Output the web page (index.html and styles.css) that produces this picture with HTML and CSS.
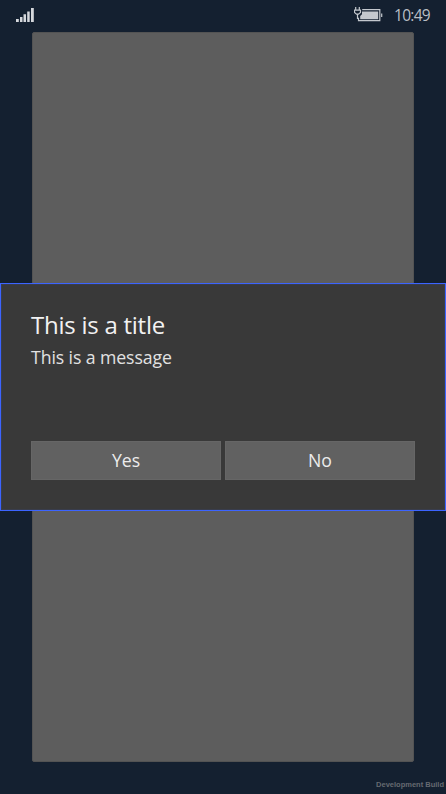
FILE: index.html
```html
<!DOCTYPE html>
<html lang="en">
<head>
<meta charset="utf-8">
<title>Message dialog</title>
<link rel="stylesheet" href="styles.css">
</head>
<body>
<div class="phone">
  <header class="status">
    <svg class="signal" width="18" height="15" viewBox="0 0 18 15" aria-hidden="true">
      <path d="M0 11h2.8v3H0zM4 9h2.5v5H4zM7.5 6.2H10V14H7.5zM11.2 3.5h2.5V14h-2.5zM15 0h2.8v14H15z"/>
    </svg>
    <svg class="battery" width="29" height="17" viewBox="0 0 29 17" aria-hidden="true">
      <path class="line" d="M8.2 3.7h17.6v11H4.5v-3M27.7 7.5v3.6"/>
      <path class="fill" d="M8 5.4h16.2v7.8H6.2V10L8 8.2z"/>
      <path class="line" d="M1.7 1v3M5.3 1v3M.5 4.2h6v2.3L4.5 8.2h-2L.5 6.5zM3.5 8v5"/>
    </svg>
    <time class="clock">10:49</time>
  </header>
  <main class="page"></main>
  <footer class="build">Development Build</footer>
  <section class="dialog" role="dialog">
    <h1 class="title">This is a title</h1>
    <p class="message">This is a message</p>
    <div class="actions">
      <button class="action">Yes</button>
      <button class="action">No</button>
    </div>
  </section>
</div>
</body>
</html>
```
FILE: styles.css
```css
* { box-sizing: border-box; }
body { margin: 0; font-family: "Open Sans", "Noto Sans", sans-serif; }
.phone {
  position: relative;
  display: flex;
  flex-direction: column;
  width: 446px;
  height: 794px;
  background: #142030;
  overflow: hidden;
}
.status {
  display: flex;
  height: 32px;
  padding: 0 15px 0 16px;
}
.signal { margin-top: 8px; fill: #d5d8dc; }
.battery { margin: 6px 11px 0 auto; }
.battery .line { fill: none; stroke: #c4c8ce; stroke-width: 1.2; }
.battery .fill { fill: #c4c8ce; }
.clock {
  width: 37px;
  font-size: 15.5px;
  line-height: 30px;
  letter-spacing: -0.7px;
  color: #b9bec5;
  white-space: nowrap;
}
.page {
  height: 730px;
  margin: 0 32px;
  border: 1px solid #535353;
  border-radius: 2px;
  background: #5d5d5d;
}
.build {
  margin-top: 18px;
  padding-right: 2px;
  font: bold 7.5px/10px "Liberation Sans", sans-serif;
  text-align: right;
  color: #666a70;
}
.dialog {
  position: absolute;
  top: 283px;
  left: 0;
  width: 446px;
  height: 228px;
  padding: 25px 30px 30px;
  border: 1px solid #3c64ff;
  background: #393939;
  box-shadow: inset 0 0 0 1px #393d4c;
  display: flex;
  flex-direction: column;
}
.title {
  margin: 0;
  font-size: 24px;
  font-weight: 400;
  line-height: 32px;
  letter-spacing: -0.25px;
  color: #f2f2f2;
}
.message {
  margin: 4px 0 0;
  font-size: 17.7px;
  line-height: 24px;
  letter-spacing: -0.1px;
  color: #e2e2e2;
}
.actions {
  display: grid;
  grid-template-columns: 1fr 1fr;
  gap: 4px;
  margin-top: auto;
}
.action {
  height: 39px;
  padding: 0;
  border: 1px solid #666;
  background: #616161;
  color: #ececec;
  font: 17.7px/37px "Open Sans", sans-serif;
}
```
